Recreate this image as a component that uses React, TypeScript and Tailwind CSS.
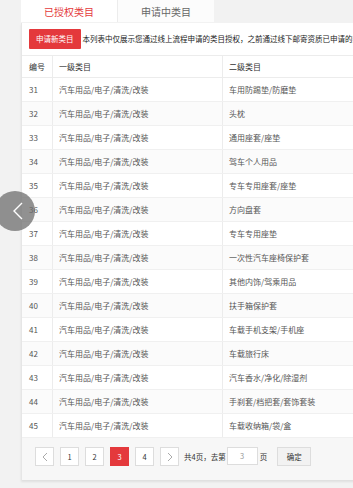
import React from 'react'

const ROWS: [number, string][] = [
  [31, '车用防踢垫/防磨垫'],
  [32, '头枕'],
  [33, '通用座套/座垫'],
  [34, '驾车个人用品'],
  [35, '专车专用座套/座垫'],
  [36, '方向盘套'],
  [37, '专车专用座垫'],
  [38, '一次性汽车座椅保护套'],
  [39, '其他内饰/驾乘用品'],
  [40, '扶手箱保护套'],
  [41, '车载手机支架/手机座'],
  [42, '车载旅行床'],
  [43, '汽车香水/净化/除湿剂'],
  [44, '手刹套/档把套/套饰套装'],
  [45, '车载收纳箱/袋/盒'],
]

function Chevron({ dir }: { dir: 'left' | 'right' }) {
  return (
    <svg width="6" height="10" viewBox="0 0 6 10" fill="none" stroke="#aaa" strokeWidth="1">
      {dir === 'left' ? <path d="M5 1 1 5l4 4" /> : <path d="M1 1l4 4-4 4" />}
    </svg>
  )
}

export default function App() {
  const pages = [1, 2, 3, 4]
  return (
    <div
      className="relative w-[353px] h-[488px] overflow-hidden bg-[#f2f2f2]"
      style={{ fontFamily: '"Noto Sans CJK SC", "Noto Sans", sans-serif' }}
    >
      <div className="ml-[21px] w-[480px]">
        {/* Tabs */}
        <div className="flex h-[22px]">
          <div className="w-[96px] flex items-center justify-center bg-white text-[10px] text-[#e4393c]">已授权类目</div>
          <div className="w-[97px] flex items-center justify-center bg-[#fcfcfc] border-l border-[#ececec] text-[10px] text-[#666]">申请中类目</div>
        </div>

        {/* Card */}
        <div className="mt-px bg-white border-l border-[#e6e6e6] shadow-[0_2px_2px_rgba(0,0,0,0.08)]">
          <div className="h-[32px] flex items-start pt-[6px] pl-[7px] gap-[2px] whitespace-nowrap">
            <button className="h-[20px] px-[7px] bg-[#e4393c] text-white text-[7.5px] leading-[20px] rounded-[1px]">申请新类目</button>
            <span className="text-[7.5px] leading-[20px] text-[#222]">
              本列表中仅展示您通过线上流程申请的类目授权，之前通过线下邮寄资质已申请的类目授权请联系客服
            </span>
          </div>

          {/* Table */}
          <div className="border-t border-[#ececec] text-[8px]">
            <div className="flex h-[22px] items-center border-b border-[#ececec] text-[#333]">
              <div className="w-[31px] h-full flex items-center pl-[7px] border-r border-[#ececec]">编号</div>
              <div className="w-[170px] h-full flex items-center pl-[6px] border-r border-[#ececec]">一级类目</div>
              <div className="flex-1 h-full flex items-center pl-[6px]">二级类目</div>
            </div>
            {ROWS.map(([id, name], i) => (
              <div
                key={id}
                className={`flex h-[24px] items-center border-b border-[#f0f0f0] text-[#555] ${i % 2 === 1 ? 'bg-[#fbfbfb]' : 'bg-white'}`}
              >
                <div className="w-[31px] h-full flex items-center pl-[7px] border-r border-[#ececec]">{id}</div>
                <div className="w-[170px] h-full flex items-center pl-[6px] border-r border-[#ececec]">汽车用品/电子/清洗/改装</div>
                <div className="flex-1 h-full flex items-center pl-[6px]">{name}</div>
              </div>
            ))}
          </div>

          {/* Pagination */}
          <div className="h-[42px] bg-[#f7f7f7] flex items-start pt-[9px] pl-[13px] text-[7.5px] text-[#333] whitespace-nowrap">
            <div className="flex gap-[6px]">
              <div className="w-[19px] h-[19px] bg-white border border-[#ddd] flex items-center justify-center">
                <Chevron dir="left" />
              </div>
              {pages.map((p) => (
                <div
                  key={p}
                  className={`w-[19px] h-[19px] flex items-center justify-center border ${p === 3 ? 'bg-[#e4393c] border-[#e4393c] text-white' : 'bg-white border-[#ddd] text-[#333]'}`}
                >
                  {p}
                </div>
              ))}
              <div className="w-[19px] h-[19px] bg-white border border-[#ddd] flex items-center justify-center">
                <Chevron dir="right" />
              </div>
            </div>
            <span className="ml-[5px] leading-[19px]">共4页，去第</span>
            <div className="ml-[1px] w-[31px] h-[18px] bg-white border border-[#ddd] flex items-center justify-center text-[#999]">3</div>
            <span className="ml-[2px] leading-[19px]">页</span>
            <button className="ml-[10px] w-[34px] h-[19px] bg-[#f2f2f2] border border-[#ddd] text-[7.5px] text-[#333]">确定</button>
          </div>
        </div>
      </div>

      {/* Floating back button */}
      <div className="absolute left-[-5px] top-[191px] w-[40px] h-[40px] rounded-full bg-[rgba(110,110,110,0.75)] flex items-center justify-center">
        <svg width="12" height="18" viewBox="0 0 12 18" fill="none" stroke="#fff" strokeWidth="1.4" className="ml-[6px]">
          <path d="M10 1 2 9l8 8" />
        </svg>
      </div>
    </div>
  )
}
